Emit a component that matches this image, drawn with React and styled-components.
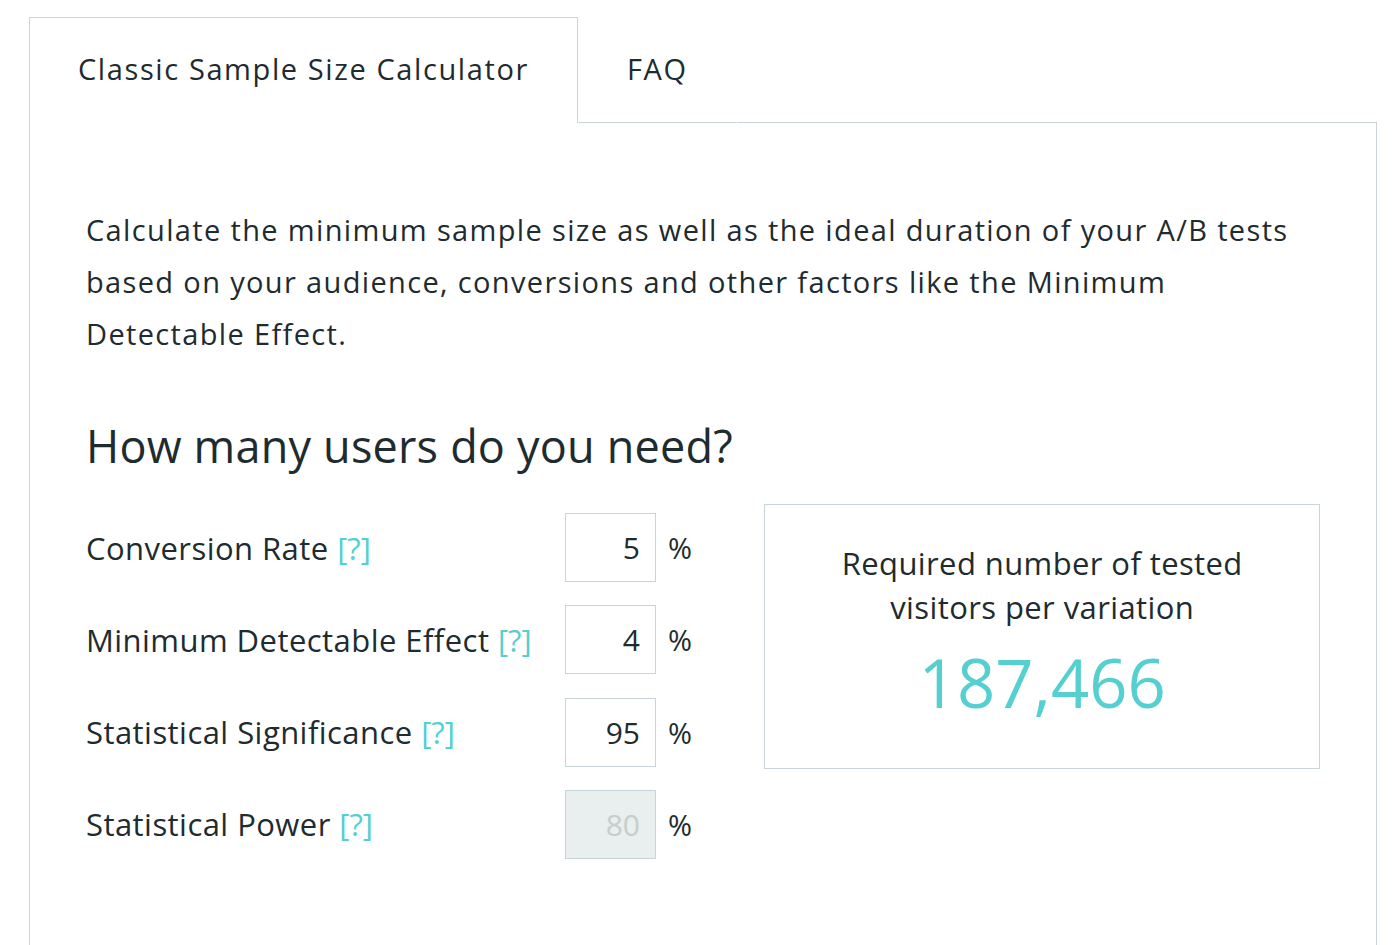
import React from 'react';
import styled, { createGlobalStyle } from 'styled-components';

const GlobalStyle = createGlobalStyle`
    body {
        margin: 0;
        background: #fff;
        font-family: "Open Sans", "Noto Sans", sans-serif;
        color: #1e2b2f;
    }
`;

const Wrapper = styled.div`
    padding: 17px 23px 0 29px;
`;

const TabBar = styled.div`
    display: flex;
    height: 106px;
`;

const Tab = styled.div`
    display: flex;
    align-items: center;
    padding: 0 48px 4px;
    font-size: 29px;
    letter-spacing: 1.6px;
    color: #1e2b2f;
    box-sizing: border-box;
    border: 1px solid ${props => (props.active ? '#c8d5d8' : 'transparent')};
    border-bottom: ${props => (props.active ? 'none' : '1px solid #c8d5d8')};
`;

const TabFiller = styled.div`
    flex: 1;
    border-bottom: 1px solid #c8d5d8;
`;

const Panel = styled.section`
    border: 1px solid #c8d5d8;
    border-top: none;
    padding: 81px 56px 140px;
`;

const Intro = styled.p`
    margin: 0;
    max-width: 1215px;
    font-size: 29px;
    letter-spacing: 1.35px;
    line-height: 52px;
`;

const Heading = styled.h2`
    margin: 58px 0 0;
    font-size: 45px;
    font-weight: 500;
    letter-spacing: 0.2px;
    line-height: 56px;
`;

const Columns = styled.div`
    display: flex;
    align-items: flex-start;
    margin-top: 30px;
`;

const Form = styled.div`
    width: 679px;
    padding-top: 9px;
    display: flex;
    flex-direction: column;
    gap: 23.3px;
`;

const Row = styled.div`
    display: grid;
    grid-template-columns: 479px 91px auto;
    align-items: center;
    height: 69px;
`;

const Label = styled.label`
    font-size: 31px;
    letter-spacing: 0.45px;
`;

const Help = styled.span`
    color: #55cfd0;
    letter-spacing: 0;
`;

const Input = styled.input`
    box-sizing: border-box;
    width: 91px;
    height: 69px;
    border: 1px solid #c8d5d8;
    padding: 0 15px 0 0;
    text-align: right;
    font-family: inherit;
    font-size: 30px;
    color: #1e2b2f;
    background: #fff;
    outline: none;

    &:disabled {
        background: #e9eeee;
        color: #c5cdcd;
    }
`;

const Unit = styled.span`
    margin-left: 12px;
    font-size: 29px;
`;

const ResultBox = styled.div`
    box-sizing: border-box;
    width: 556px;
    height: 265px;
    border: 1px solid #c8d5d8;
    padding: 36px 20px 0;
    text-align: center;
`;

const ResultLabel = styled.div`
    font-size: 31px;
    letter-spacing: 0.4px;
    line-height: 44px;
`;

const ResultValue = styled.div`
    margin-top: 13px;
    font-size: 67px;
    line-height: 80px;
    color: #55cfd0;
`;

const fields = [
    { label: 'Conversion Rate', value: '5' },
    { label: 'Minimum Detectable Effect', value: '4' },
    { label: 'Statistical Significance', value: '95' },
    { label: 'Statistical Power', value: '80', disabled: true },
];

const App = () => {
    return (
        <>
            <GlobalStyle />
            <Wrapper>
                <TabBar>
                    <Tab active>Classic Sample Size Calculator</Tab>
                    <Tab>FAQ</Tab>
                    <TabFiller />
                </TabBar>
                <Panel>
                    <Intro>
                        Calculate the minimum sample size as well as the ideal duration of your A/B tests
                        based on your audience, conversions and other factors like the Minimum
                        Detectable Effect.
                    </Intro>
                    <Heading>How many users do you need?</Heading>
                    <Columns>
                        <Form>
                            {fields.map(f => (
                                <Row key={f.label}>
                                    <Label>
                                        {f.label} <Help>[?]</Help>
                                    </Label>
                                    <Input defaultValue={f.value} disabled={f.disabled} />
                                    <Unit>%</Unit>
                                </Row>
                            ))}
                        </Form>
                        <ResultBox>
                            <ResultLabel>
                                Required number of tested
                                <br />
                                visitors per variation
                            </ResultLabel>
                            <ResultValue>187,466</ResultValue>
                        </ResultBox>
                    </Columns>
                </Panel>
            </Wrapper>
        </>
    );
};

export default App;
